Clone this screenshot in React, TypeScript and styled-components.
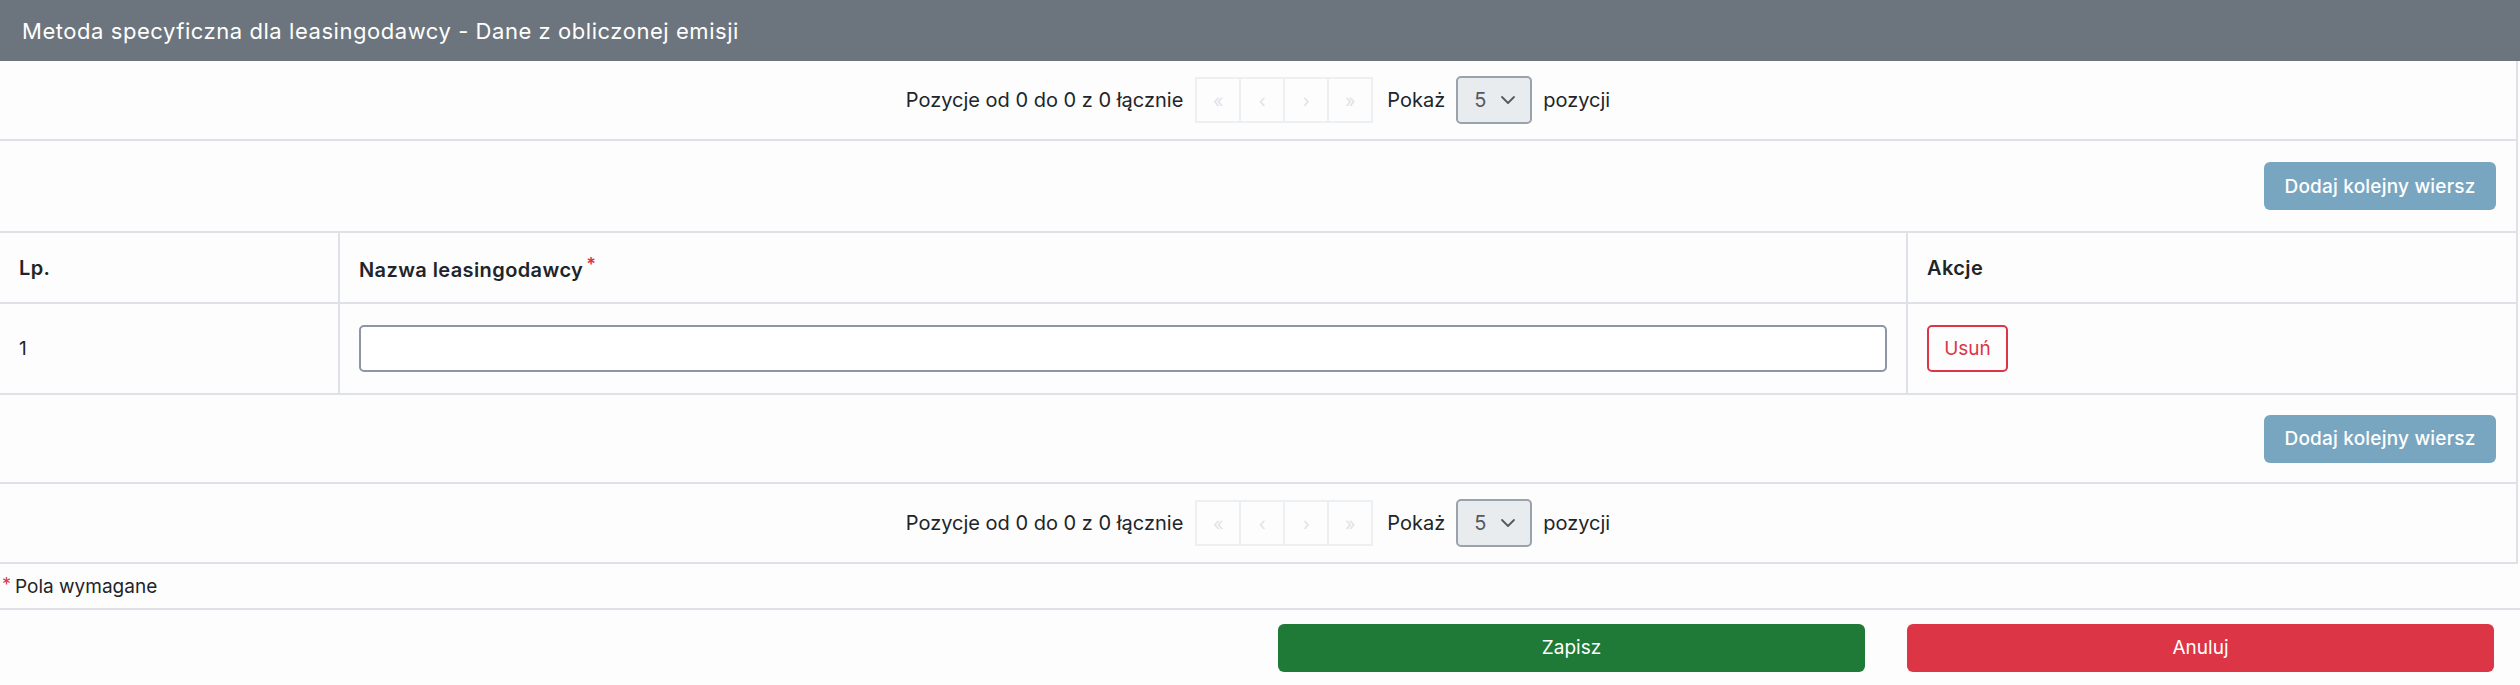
import React from "react";
import styled, { createGlobalStyle } from "styled-components";
import { ChevronDown } from "lucide-react";

const GlobalStyle = createGlobalStyle`
  body {
    margin: 0;
    background: #fdfdfd;
    font-family: Inter, "Noto Sans", sans-serif;
    color: #212529;
  }
  * { box-sizing: border-box; }
`;

const Header = styled.div`
  height: 61px;
  display: flex;
  align-items: center;
  padding-left: 22px;
  background: #6c757d;
  color: #fff;
  font-size: 22px;
  letter-spacing: 0.55px;
`;

const Body = styled.div`
  margin-right: 2px;
  border-right: 2px solid #dee2e6;
`;

const PagerRow = styled.div`
  height: 80px;
  border-bottom: 2px solid #dee2e6;
  display: flex;
  align-items: center;
  justify-content: center;
  gap: 11px;
  font-size: 20px;
`;

const PageButtons = styled.div`
  display: flex;
  margin: 0 3px;
`;

const PageBox = styled.span`
  width: 46px;
  height: 46px;
  display: flex;
  align-items: center;
  justify-content: center;
  border: 2px solid #edf0f2;
  margin-left: -2px;
  color: #dfe3e7;
  font-size: 18px;
`;

const SelectBox = styled.div`
  width: 76px;
  height: 48px;
  display: flex;
  align-items: center;
  justify-content: space-between;
  padding: 0 10px 0 16px;
  background: #e9ecef;
  border: 2px solid #9aa2ab;
  border-radius: 5px;
  color: #55595e;
  font-size: 20px;
`;

const ActionRow = styled.div<{ $h: number }>`
  height: ${(p) => p.$h}px;
  border-bottom: 2px solid #dee2e6;
  display: flex;
  align-items: center;
  justify-content: flex-end;
  padding-right: 20px;
`;

const AddButton = styled.button`
  width: 232px;
  height: 48px;
  border: none;
  border-radius: 6px;
  background: #78a6c0;
  color: #fff;
  font-family: inherit;
  font-size: 19px;
  font-weight: 500;
  letter-spacing: 0.2px;
`;

const Table = styled.table`
  width: 100%;
  border-collapse: collapse;
  table-layout: fixed;
`;

const Th = styled.th<{ $w?: number }>`
  ${(p) => (p.$w ? `width: ${p.$w}px;` : "")}
  height: 70px;
  padding: 0 19px;
  text-align: left;
  font-size: 20px;
  font-weight: 600;
  letter-spacing: 0.4px;
  border-bottom: 2px solid #dee2e6;
  border-left: 2px solid #dee2e6;
  &:first-child { border-left: none; }
`;

const Td = styled.td`
  height: 91px;
  padding: 0 19px;
  font-size: 19px;
  border-bottom: 2px solid #dee2e6;
  border-left: 2px solid #dee2e6;
  &:first-child { border-left: none; }
`;

const Required = styled.sup`
  color: #dc3545;
  font-size: 18px;
  margin-left: 3px;
  vertical-align: 6px;
`;

const TextInput = styled.input`
  display: block;
  width: 100%;
  height: 47px;
  border: 2px solid #8c96a4;
  border-radius: 5px;
  background: #fff;
  font-family: inherit;
  font-size: 19px;
`;

const DeleteButton = styled.button`
  width: 81px;
  height: 47px;
  border: 2px solid #dc3545;
  border-radius: 5px;
  background: transparent;
  color: #dc3545;
  font-family: inherit;
  font-size: 19px;
`;

const Footnote = styled.div`
  height: 46px;
  border-bottom: 2px solid #dee2e6;
  display: flex;
  align-items: center;
  font-size: 19px;
`;

const FootStar = styled.span`
  color: #dc3545;
  font-size: 18px;
  margin: 0 4px 0 2px;
  align-self: flex-start;
  margin-top: 10px;
`;

const FooterRow = styled.div`
  height: 77px;
  border-bottom: 2px solid #d3d8dc;
  display: flex;
  align-items: center;
  justify-content: flex-end;
  gap: 42px;
  padding-right: 26px;
`;

const MainButton = styled.button<{ $bg: string }>`
  width: 587px;
  height: 48px;
  border: none;
  border-radius: 6px;
  background: ${(p) => p.$bg};
  color: #fff;
  font-family: inherit;
  font-size: 19px;
`;

const Pager = () => (
  <PagerRow>
    <span>Pozycje od 0 do 0 z 0 łącznie</span>
    <PageButtons>
      <PageBox>«</PageBox>
      <PageBox>‹</PageBox>
      <PageBox>›</PageBox>
      <PageBox>»</PageBox>
    </PageButtons>
    <span>Pokaż</span>
    <SelectBox>
      5 <ChevronDown size={24} strokeWidth={1.8} color="#55595e" />
    </SelectBox>
    <span>pozycji</span>
  </PagerRow>
);

export default function App() {
  return (
    <>
      <GlobalStyle />
      <Header>Metoda specyficzna dla leasingodawcy - Dane z obliczonej emisji</Header>
      <Body>
        <Pager />
        <ActionRow $h={92}>
          <AddButton>Dodaj kolejny wiersz</AddButton>
        </ActionRow>
        <Table>
          <thead>
            <tr>
              <Th $w={339}>Lp.</Th>
              <Th $w={1568}>
                Nazwa leasingodawcy<Required>*</Required>
              </Th>
              <Th>Akcje</Th>
            </tr>
          </thead>
          <tbody>
            <tr>
              <Td>1</Td>
              <Td>
                <TextInput type="text" />
              </Td>
              <Td>
                <DeleteButton>Usuń</DeleteButton>
              </Td>
            </tr>
          </tbody>
        </Table>
        <ActionRow $h={89}>
          <AddButton>Dodaj kolejny wiersz</AddButton>
        </ActionRow>
        <Pager />
      </Body>
      <Footnote>
        <FootStar>*</FootStar>
        Pola wymagane
      </Footnote>
      <FooterRow>
        <MainButton $bg="#1f7a37">Zapisz</MainButton>
        <MainButton $bg="#dc3545">Anuluj</MainButton>
      </FooterRow>
    </>
  );
}
